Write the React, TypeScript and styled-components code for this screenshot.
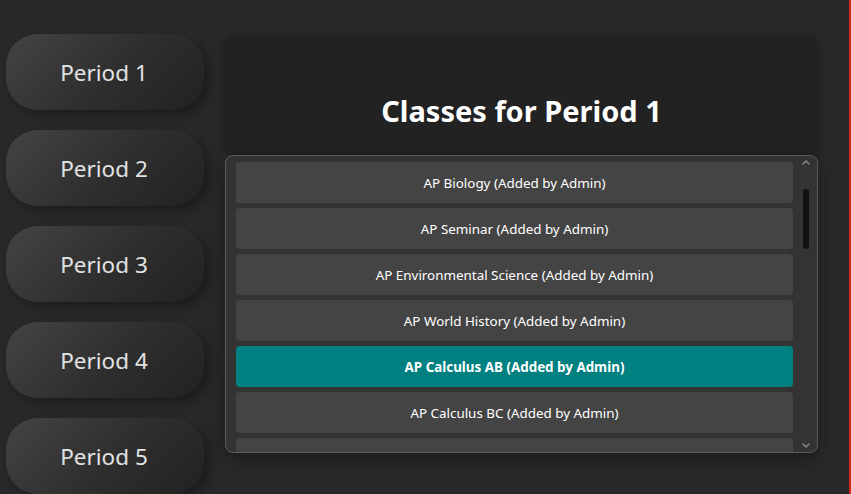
import { createGlobalStyle, styled } from 'styled-components';

const periods = ['Period 1', 'Period 2', 'Period 3', 'Period 4', 'Period 5'];

// the last row is only peeking in under the fold, its label is below the cut
const classes = [
  'AP Biology (Added by Admin)',
  'AP Seminar (Added by Admin)',
  'AP Environmental Science (Added by Admin)',
  'AP World History (Added by Admin)',
  'AP Calculus AB (Added by Admin)',
  'AP Calculus BC (Added by Admin)',
  '',
];

const selectedIndex = 4;

const App = () => {
  return (
    <>
      <GlobalStyle />
      <Page>
        <Sidebar>
          {periods.map(p => (
            <PeriodButton key={p}>{p}</PeriodButton>
          ))}
        </Sidebar>
        <Main>
          <Header>
            <h1>Classes for Period 1</h1>
          </Header>
          <ListPanel>
            <Items>
              {classes.map((c, i) => (
                <ClassItem key={i} $selected={i === selectedIndex}>
                  {c}
                </ClassItem>
              ))}
            </Items>
            <ScrollTrack>
              <Arrow viewBox="0 0 8 5">
                <path d="M0.5 4.5 L4 1 L7.5 4.5" />
              </Arrow>
              <ThumbArea>
                <Thumb />
              </ThumbArea>
              <Arrow viewBox="0 0 8 5">
                <path d="M0.5 0.5 L4 4 L7.5 0.5" />
              </Arrow>
            </ScrollTrack>
          </ListPanel>
        </Main>
        <EdgeStripe />
      </Page>
    </>
  );
};

const GlobalStyle = createGlobalStyle`
  html, body {
    margin: 0;
    padding: 0;
    background: #29292c;
  }
  body {
    font-family: 'Noto Sans', 'Open Sans', sans-serif;
  }
`;

const Page = styled.div`
  box-sizing: border-box;
  display: flex;
  width: 851px;
  height: 494px;
  overflow: hidden;
  background: #29292c;
  padding-left: 6px;
`;

const Sidebar = styled.div`
  display: flex;
  flex-direction: column;
  gap: 20px;
  width: 198px;
  padding-top: 34px;
  flex-shrink: 0;
`;

const PeriodButton = styled.div`
  box-sizing: border-box;
  display: flex;
  align-items: center;
  justify-content: center;
  height: 76px;
  flex-shrink: 0;
  border-radius: 32px;
  background: linear-gradient(135deg, #444444 0%, #2e2e2e 55%, #222222 100%);
  box-shadow: 5px 5px 12px rgba(0, 0, 0, 0.35);
  color: #e2e2e2;
  font-size: 22.5px;
  padding-right: 2px;
`;

const Main = styled.div`
  display: flex;
  flex-direction: column;
  gap: 3px;
  width: 593px;
  margin-left: 21px;
  padding-top: 36px;
`;

const Header = styled.div`
  box-sizing: border-box;
  display: flex;
  align-items: flex-end;
  justify-content: center;
  height: 116px;
  padding-bottom: 23px;
  border-radius: 10px;
  background: #222222;
  box-shadow: 0 2px 12px rgba(0, 0, 0, 0.35);
  h1 {
    margin: 0;
    color: #ffffff;
    font-size: 29px;
    font-weight: 700;
    line-height: 36px;
  }
`;

const ListPanel = styled.div`
  box-sizing: border-box;
  display: flex;
  height: 298px;
  border: 1px solid #5a5a5a;
  border-radius: 8px;
  background: #333333;
  box-shadow: 0 6px 18px rgba(0, 0, 0, 0.35);
  overflow: hidden;
`;

const Items = styled.div`
  flex: 1;
  display: flex;
  flex-direction: column;
  gap: 5px;
  padding: 6px 0 0 10px;
  overflow: hidden;
`;

const ClassItem = styled.div<{ $selected?: boolean }>`
  display: flex;
  align-items: center;
  justify-content: center;
  height: 41px;
  flex-shrink: 0;
  border-radius: 4px;
  background: ${p => (p.$selected ? '#008080' : '#444444')};
  color: #ffffff;
  font-size: 13.4px;
  font-weight: ${p => (p.$selected ? 700 : 400)};
`;

const ScrollTrack = styled.div`
  display: flex;
  flex-direction: column;
  align-items: center;
  width: 24px;
  flex-shrink: 0;
  padding: 4px 0 4px 0;
`;

const Arrow = styled.svg`
  width: 8px;
  height: 5px;
  margin-left: 2px;
  flex-shrink: 0;
  path {
    fill: none;
    stroke: #8a8a8a;
    stroke-width: 1.3;
  }
`;

const ThumbArea = styled.div`
  flex: 1;
  display: flex;
  justify-content: center;
  padding-top: 24px;
  margin-left: 2px;
`;

const Thumb = styled.div`
  width: 6px;
  height: 60px;
  border-radius: 3px;
  background: #111111;
`;

const EdgeStripe = styled.div`
  margin-left: auto;
  width: 2px;
  background: #d2291c;
`;

export default App;
